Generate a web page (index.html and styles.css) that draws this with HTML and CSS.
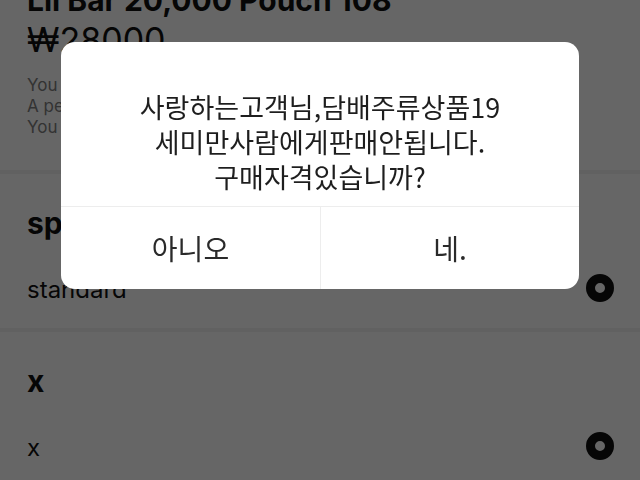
FILE: index.html
```html
<!DOCTYPE html>
<html lang="ko">
<head>
<meta charset="utf-8">
<title>상품</title>
<link rel="stylesheet" href="styles.css">
</head>
<body>
<div class="page">
  <section class="product">
    <h1 class="title">Lil Bar 20,000 Pouch 108</h1>
    <div class="price">₩28000</div>
    <p class="desc">You must be of legal age to buy this item.<br>A person under 19 may not purchase it.<br>You will be asked to verify your age.</p>
  </section>
  <div class="sep"></div>
  <section class="group">
    <h2 class="group-title">spec</h2>
    <div class="option"><span class="option-label">standard</span><span class="radio"></span></div>
  </section>
  <div class="sep"></div>
  <section class="group">
    <h2 class="group-title">x</h2>
    <div class="option"><span class="option-label">x</span><span class="radio"></span></div>
  </section>
</div>
<div class="overlay">
  <div class="dialog">
    <div class="message">
      <div class="line">사랑하는고객님,담배주류상품19</div>
      <div class="line">세미만사람에게판매안됩니다.</div>
      <div class="line">구매자격있습니까?</div>
    </div>
    <div class="actions">
      <div class="action">아니오</div>
      <div class="action">네.</div>
    </div>
  </div>
</div>
</body>
</html>
```
FILE: styles.css
```css
html, body {
  margin: 0;
  padding: 0;
  width: 640px;
  height: 480px;
  overflow: hidden;
  background: #fff;
  font-family: Inter, "Noto Sans CJK KR", sans-serif;
}

.page {
  margin-top: -17px;
  color: #111;
}

.product {
  padding: 0 26px 32px 27px;
}

.title {
  margin: 0;
  font-size: 30px;
  line-height: 34px;
  font-weight: 700;
  white-space: nowrap;
}

.price {
  margin-top: 5px;
  font-size: 34px;
  line-height: 36px;
  font-weight: 400;
}

.desc {
  margin: 17px 0 0;
  font-size: 17px;
  line-height: 21px;
  color: #808080;
  white-space: nowrap;
}

.sep {
  height: 4px;
  background: #f2f2f2;
}

.group {
  padding: 31px 26px 24px 27px;
}

.group-title {
  margin: 0;
  font-size: 30px;
  line-height: 36px;
  font-weight: 700;
}

.option {
  margin-top: 35px;
  height: 28px;
  display: flex;
  align-items: center;
  justify-content: space-between;
}

.option-label {
  font-size: 24px;
  line-height: 28px;
}

.radio {
  width: 28px;
  height: 28px;
  margin-bottom: 5px;
  box-sizing: border-box;
  border: 9px solid #111;
  border-radius: 50%;
  background: #fff;
}

.overlay {
  position: fixed;
  inset: 0;
  background: rgba(0, 0, 0, 0.6);
  display: flex;
  justify-content: center;
  align-items: flex-start;
  padding-top: 42px;
  box-sizing: border-box;
}

.dialog {
  width: 518px;
  background: #fff;
  border-radius: 14px;
  overflow: hidden;
  font-family: "Noto Sans CJK KR", sans-serif;
}

.message {
  padding: 47px 10px 12px;
  text-align: center;
  font-size: 27px;
  line-height: 35px;
  color: #1e1e1e;
}

.line {
  white-space: nowrap;
}

.actions {
  display: grid;
  grid-template-columns: 1fr 1fr;
  border-top: 1px solid #ededed;
  height: 82px;
}

.action {
  display: flex;
  align-items: center;
  justify-content: center;
  font-size: 28px;
  color: #2a2a2a;
}

.action + .action {
  border-left: 1px solid #ededed;
}
```
